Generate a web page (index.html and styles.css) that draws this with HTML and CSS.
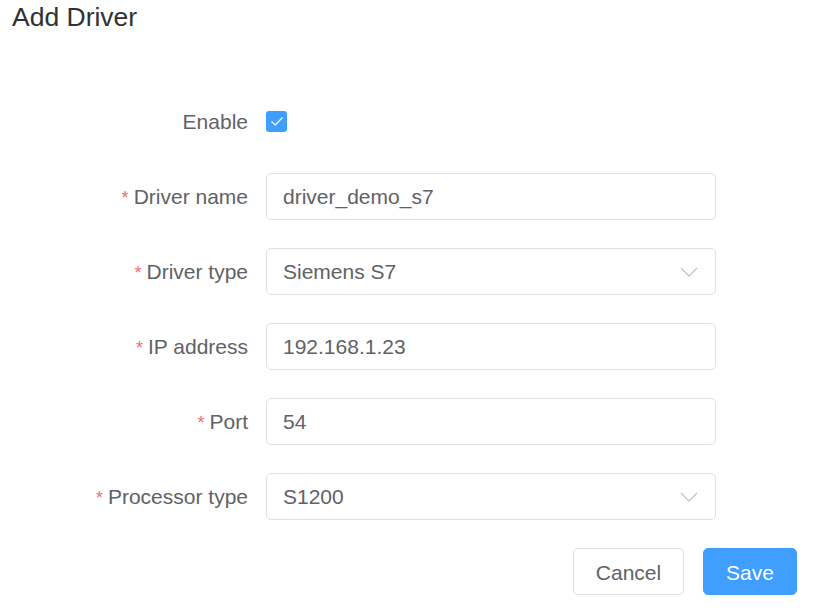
FILE: index.html
```html
<!DOCTYPE html>
<html>
<head>
<meta charset="utf-8">
<link rel="stylesheet" href="styles.css">
</head>
<body>
<div class="dialog">
  <h1 class="title">Add Driver</h1>
  <form class="form">
    <div class="row">
      <label class="label">Enable</label>
      <div class="control">
        <span class="checkbox">
          <svg width="14" height="11" viewBox="0 0 14 11"><path d="M1.5 5.5 L5.3 9 L12.5 1.5" fill="none" stroke="#fff" stroke-width="1.2"/></svg>
        </span>
      </div>
    </div>
    <div class="row">
      <label class="label"><span class="req">*</span>Driver name</label>
      <div class="control"><div class="input">driver_demo_s7</div></div>
    </div>
    <div class="row">
      <label class="label"><span class="req">*</span>Driver type</label>
      <div class="control"><div class="input select">Siemens S7<svg class="arrow" width="18" height="10" viewBox="0 0 18 10"><path d="M1 1 L9 9 L17 1" fill="none" stroke="#c0c4cc" stroke-width="1.3"/></svg></div></div>
    </div>
    <div class="row">
      <label class="label"><span class="req">*</span>IP address</label>
      <div class="control"><div class="input">192.168.1.23</div></div>
    </div>
    <div class="row">
      <label class="label"><span class="req">*</span>Port</label>
      <div class="control"><div class="input">54</div></div>
    </div>
    <div class="row">
      <label class="label"><span class="req">*</span>Processor type</label>
      <div class="control"><div class="input select">S1200<svg class="arrow" width="18" height="10" viewBox="0 0 18 10"><path d="M1 1 L9 9 L17 1" fill="none" stroke="#c0c4cc" stroke-width="1.3"/></svg></div></div>
    </div>
  </form>
  <div class="footer">
    <button class="btn cancel" type="button">Cancel</button>
    <button class="btn save" type="button">Save</button>
  </div>
</div>
</body>
</html>
```
FILE: styles.css
```css
* { box-sizing: border-box; }
html, body { margin: 0; padding: 0; background: #fff; }
body { font-family: "Liberation Sans", Arial, sans-serif; }
.dialog { width: 814px; height: 611px; }
.title {
  margin: 0;
  padding: 2px 0 0 12px;
  font-size: 26.5px;
  font-weight: normal;
  line-height: 30px;
  color: #303133;
}
.form { margin-top: 66px; }
.row { display: flex; align-items: center; height: 47px; margin-bottom: 28px; }
.label {
  width: 266px;
  padding-right: 18px;
  padding-top: 1px;
  text-align: right;
  font-size: 21px;
  color: #606266;
}
.req { color: #f56c6c; margin-right: 5px; font-size: 18px; }
.control { width: 450px; display: flex; align-items: center; }
.checkbox {
  width: 21px; height: 21px;
  background: #409eff;
  border-radius: 3px;
  display: flex; align-items: center; justify-content: center;
}
.input {
  width: 450px;
  height: 47px;
  border: 1px solid #dcdfe6;
  border-radius: 5px;
  padding: 1px 16px 0;
  font-size: 21px;
  color: #606266;
  display: flex; align-items: center;
}
.select { justify-content: space-between; padding-right: 17px; }
.arrow { display: block; margin-top: -1px; }
.footer { display: flex; justify-content: flex-end; gap: 19px; padding-right: 17px; margin-top: 0; }
.btn {
  height: 47px;
  border-radius: 5px;
  font-family: "Liberation Sans", Arial, sans-serif;
  font-size: 21px;
  padding: 2px 0 0;
  cursor: pointer;
}
.cancel { width: 111px; background: #fff; border: 1px solid #dcdfe6; color: #606266; }
.save { width: 94px; background: #409eff; border: 1px solid #409eff; color: #fff; }
```
